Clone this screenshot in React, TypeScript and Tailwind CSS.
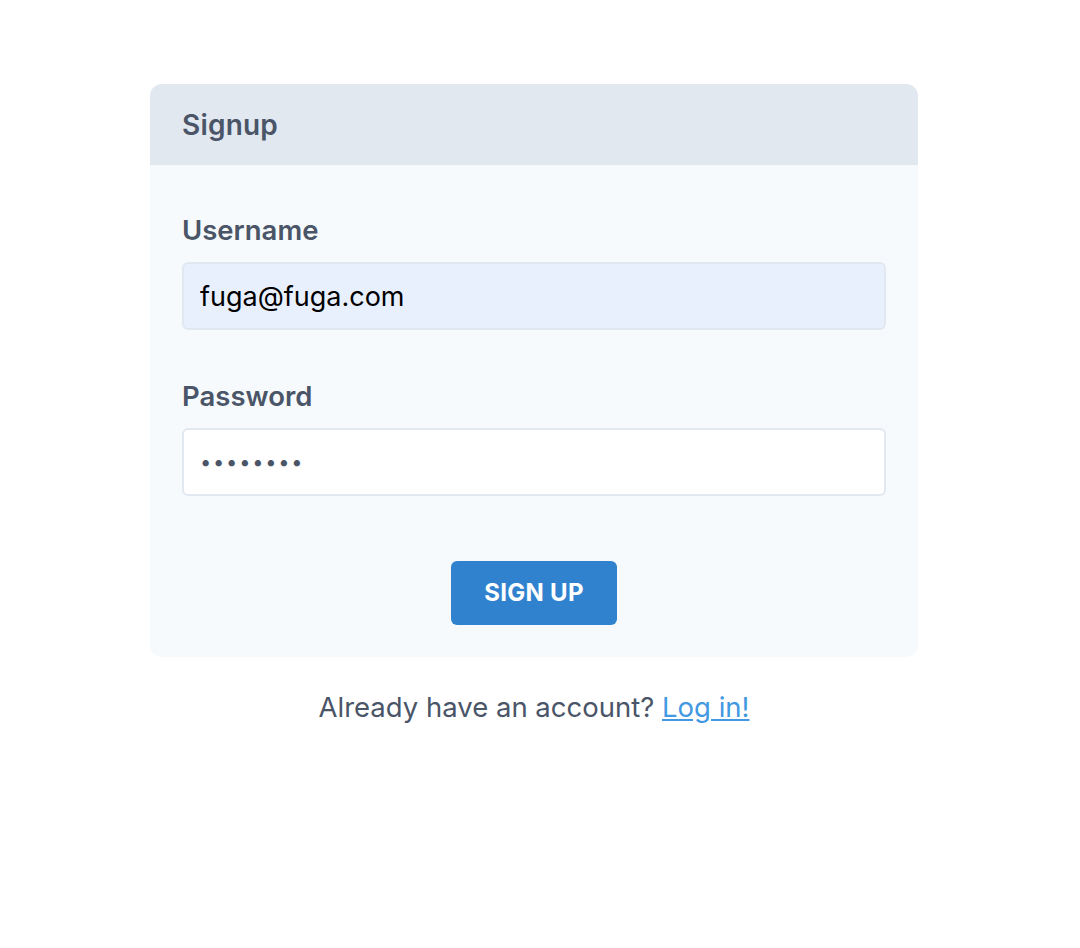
import React from "react";

const font = { fontFamily: "Inter, 'Noto Sans', sans-serif" };

export default function App() {
  return (
    <div className="min-h-[948px] w-[1068px] bg-white" style={font}>
      <div className="flex flex-col items-center pt-[84px]">
        <div className="w-[768px] overflow-hidden rounded-[12px] bg-[#f7fafc]">
          <div className="flex h-[81px] items-center bg-[#e2e8f0] px-8">
            <h2 className="text-[28px] font-semibold tracking-[0.2px] text-[#4a5568]">Signup</h2>
          </div>
          <form className="flex flex-col px-8 pb-8 pt-[47px]">
            <label className="h-9 text-[27.5px] font-semibold leading-9 text-[#4a5568]">Username</label>
            <input
              className="mt-[14px] h-[68px] rounded-[6px] border-2 border-[#e2e8f0] bg-[#e8f0fe] px-4 text-[27px] text-black outline-none"
              defaultValue="fuga@fuga.com"
            />
            <label className="mt-12 h-9 text-[27.5px] font-semibold leading-9 text-[#4a5568]">Password</label>
            <input
              type="password"
              className="mt-[14px] h-[68px] rounded-[6px] border-2 border-[#e2e8f0] bg-white px-4 text-[20px] tracking-[1.8px] text-[#4a5568] outline-none"
              defaultValue="password"
            />
            <div className="mt-[65px] flex justify-center">
              <button
                type="button"
                className="h-16 w-[166px] rounded-[6px] bg-[#3182ce] text-[24px] font-bold tracking-[0.3px] text-white"
              >
                SIGN UP
              </button>
            </div>
          </form>
        </div>
        <p className="mt-[30px] text-[27.5px] leading-10 text-[#4a5568]">
          Already have an account?{" "}
          <a href="#" className="text-[#4299e1] underline">
            Log in!
          </a>
        </p>
      </div>
    </div>
  );
}
